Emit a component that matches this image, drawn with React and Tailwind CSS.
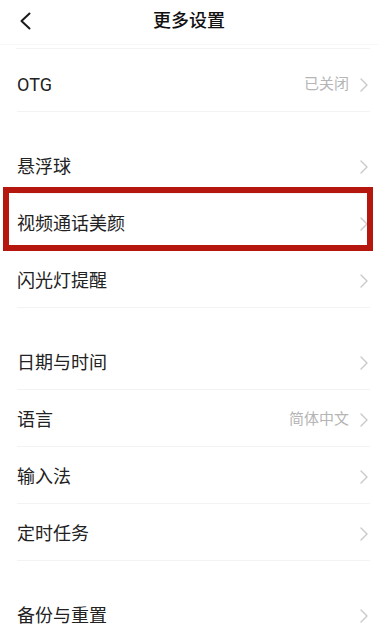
import React from "react"

const sections = [
  [{ label: "OTG", value: "已关闭" }],
  [{ label: "悬浮球" }, { label: "视频通话美颜", marked: true }, { label: "闪光灯提醒" }],
  [{ label: "日期与时间" }, { label: "语言", value: "简体中文" }, { label: "输入法" }, { label: "定时任务" }],
  [{ label: "备份与重置" }],
]

function Chevron() {
  return (
    <svg width="8" height="14" viewBox="0 0 8 14" fill="none" className="shrink-0">
      <path d="M1 1l6 6-6 6" stroke="#c9c9c9" strokeWidth="1.4" strokeLinecap="round" strokeLinejoin="round" />
    </svg>
  )
}

function Row({ label, value, marked }) {
  return (
    <div className="relative h-[57px] ml-[17px] mr-[8px] flex items-center border-b border-[#f3f3f3]">
      <span className="text-[18px] text-[#222] pt-[3px]">{label}</span>
      <div className="ml-auto flex items-center gap-[11px] pr-[2px] pt-[3px]">
        {value && <span className="text-[15px] text-[#b5b5b5]">{value}</span>}
        <Chevron />
      </div>
      {marked && (
        <div className="absolute -left-[14px] -right-[3px] -top-[7px] -bottom-[1px] border-[6px] border-[#b5170f] pointer-events-none" />
      )}
    </div>
  )
}

export default function App() {
  return (
    <div className="w-[378px] h-[625px] overflow-hidden bg-white font-['Roboto','Noto_Sans_CJK_SC',sans-serif]">
      <div className="h-[45px] relative flex items-center justify-center border-b border-[#f6f6f6]">
        <svg width="14" height="18" viewBox="0 0 14 18" fill="none" className="absolute left-[18px] top-[12px]">
          <path d="M11.5 1.5L3.5 9l8 7.5" stroke="#1a1a1a" strokeWidth="2" strokeLinecap="round" strokeLinejoin="round" />
        </svg>
        <span className="text-[18px] font-medium text-[#111] -mt-[3px]">更多设置</span>
      </div>
      <div className="mt-[3px] ml-[16px] mr-[8px] border-t border-[#f3f3f3]" />
      <div className="pt-[6px] flex flex-col gap-[25px]">
        {sections.map((rows, i) => (
          <div key={i}>
            {rows.map(r => (
              <Row key={r.label} {...r} />
            ))}
          </div>
        ))}
      </div>
    </div>
  )
}
